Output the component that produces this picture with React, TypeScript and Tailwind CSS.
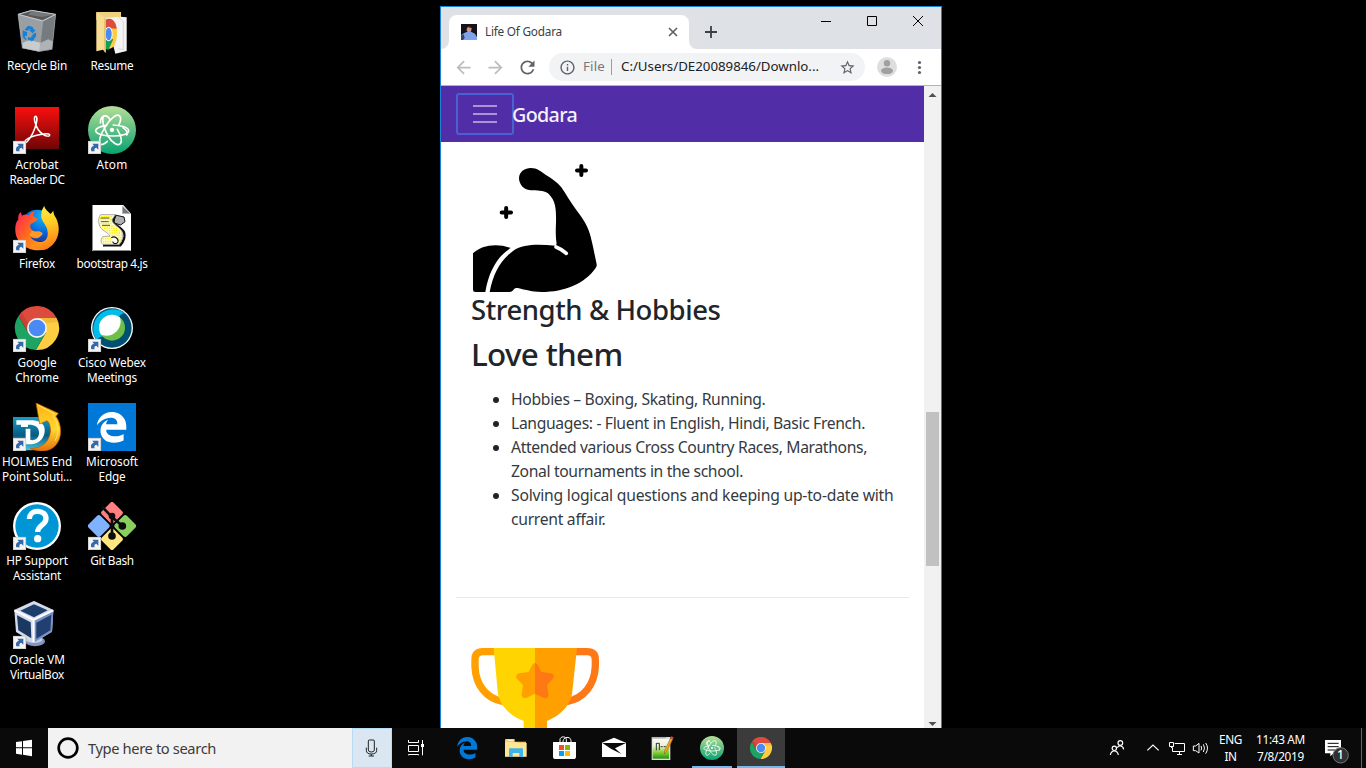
import { useLayoutEffect, useRef } from "react";
import type { ReactNode } from "react";
import { MdArrowBack, MdArrowForward, MdRefresh, MdInfoOutline, MdStarBorder } from "react-icons/md";

/** Single line of text whose tracking is adjusted so that it fills a given width. */
function Fit({ w, children, className = "" }: { w: number; children: string; className?: string }) {
  const ref = useRef<HTMLSpanElement>(null);
  useLayoutEffect(() => {
    const el = ref.current;
    if (!el) return;
    el.style.letterSpacing = "0px";
    const natural = el.getBoundingClientRect().width;
    el.style.letterSpacing = `${(w - natural) / children.length}px`;
  }, [w, children]);
  return (
    <span ref={ref} className={`inline-block whitespace-pre ${className}`}>
      {children}
    </span>
  );
}

const EDGE =
  "M25.7 228.2l.4-.7c0 .2 0 .5-.1.7h-.3zm460.6 15.5c0-44-7.8-84.5-28.8-122.4C416.5 47.8 343.9 8 258.9 8 119 7.7 40.6 113.2 26 227.5c42.4-61.3 117.1-121.4 220.4-125 0 0 109.7 0 99.4 105H170c6.4-37.4 18.6-59 34.3-78.9-75.1 34.9-121.9 96.1-120.8 188.4.8 71.5 50.1 144.8 120.8 172 83.4 31.8 192.8 7.2 240.1-21.3V363.3c-80.9 56.5-270.9 60.9-272.3-67.6h314.2v-52z";

function ChromeArt() {
  return (
    <>
      <path d="M55.6 363A66 66 0 0 1 169.8 369H111L85 414Z" fill="#dc4b3e" />
      <path d="M169.8 369A66 66 0 0 1 107.5 465L137 414L111 369Z" fill="#ffcd41" />
      <path d="M107.5 465A66 66 0 0 1 55.6 363L85 414H137Z" fill="#1da462" />
      <path d="M111 369H169.8L174 381L137 385Z" fill="#e0a52c" opacity=".45" />
      <path d="M55.6 363L85 414L92 395L66 355Z" fill="#a83228" opacity=".35" />
      <circle cx="111" cy="399" r="30" fill="#f4f4f4" />
      <circle cx="111" cy="399" r="25" fill="#4a8af4" />
    </>
  );
}

function AtomArt() {
  return (
    <>
      <defs>
        <linearGradient id="atomGreen" x1="0" y1="0" x2="0" y2="1">
          <stop offset="0" stopColor="#b5df97" />
          <stop offset=".5" stopColor="#5fbf84" />
          <stop offset="1" stopColor="#06a471" />
        </linearGradient>
      </defs>
      <circle cx="336" cy="390" r="72" fill="url(#atomGreen)" />
      <g fill="none" stroke="#fff" strokeWidth="5" strokeLinecap="round">
        <path d="M320 376C301 379 287 385 287 392C287 401 310 408 340 408C368 408 386 401 386 392C386 383 365 377 340 375" />
        <path d="M322 424C312 434 303 436 300 430C295 420 304 400 316 380C331 356 349 341 358 347C364 352 362 364 356 376" />
        <path d="M330 358C322 347 314 344 310 350C305 361 312 387 324 408C337 430 354 438 361 431C367 423 362 405 352 388" />
        <path d="M301 369C301 353 309 345 320 348" />
        <path d="M369 383C379 390 386 399 380 405" />
      </g>
      <circle cx="336" cy="390" r="6.500" fill="#fff" />
    </>
  );
}

const icons: Record<string, ReactNode> = {
  recycle: (
    <g transform="translate(-39 -21)">
      <path d="M54 43L95 30L167 43L156 149L117 155L67 145Z" fill="#8d9297" />
      <path d="M54 43L128 64L117 155L67 145Z" fill="#9a9fa3" />
      <path d="M128 64L167 43L156 149L117 155Z" fill="#767b80" />
      <path d="M59 43L95 33L161 44L127 60Z" fill="#55585b" />
      <path d="M95 33L161 44L127 51L85 44Z" fill="#74787b" />
      <path d="M67 129L88 121L122 128L119 154L69 144Z" fill="#c9cccd" />
      <path d="M122 128L145 118L158 124L155 147L118 154Z" fill="#afb3b5" />
      <path d="M54 43L95 31L167 43L128 63Z" fill="none" stroke="#c7cacb" strokeWidth="3" />
      <path d="M54 43L67 145M167 43L156 149M128 64L118 154" stroke="#b4b8ba" strokeWidth="1.500" />
      <g fill="#1580d5">
        <path d="M78 84L85 77L97 80L102 89L107 90L98 100L87 91L92 90L88 87L83 93L74 89Z" />
        <path d="M68 91L82 97L80 110L76 106L74 112L80 116L77 121L68 111Z" />
        <path d="M84 111L92 113V122L84 120ZM94 107L104 117L94 125L94 121L88 119L94 111ZM100 101L109 98L107 112L101 116L96 107Z" />
      </g>
    </g>
  ),
  resume: (
    <g transform="translate(-264 -21)">
      <path d="M289 36H363V60H289Z" fill="#eed27c" />
      <path d="M318 53L362 50L380 52V153L346 161Z" fill="#f3f3f3" />
      <path d="M357 51L370 66V149L355 146" fill="none" stroke="#c9c9c9" strokeWidth="2" />
      <path d="M316 59C340 48 352 74 351 102C350 137 335 153 318 144Z" fill="#ffcd41" />
      <path d="M317 59C336 50 348 66 350 86L317 84Z" fill="#dc4b3e" />
      <path d="M316 112L340 118L325 150L316 146Z" fill="#159f55" />
      <ellipse cx="326" cy="102" rx="12" ry="22" fill="#f5f5f5" />
      <ellipse cx="326" cy="102" rx="9" ry="19" fill="#4a8af4" />
      <path d="M289 37L317 55V159L309 149L289 154Z" fill="#f8dc91" />
      <path d="M312 55L317 58V158L312 152Z" fill="#e5c46d" />
    </g>
  ),
  acrobat: (
    <g transform="translate(-39 -318)">
      <defs>
        <linearGradient id="acroRed" x1="0" y1="0" x2="0" y2="1">
          <stop offset="0" stopColor="#fa0f0f" />
          <stop offset="1" stopColor="#6f0505" />
        </linearGradient>
      </defs>
      <path d="M45 321H177V447H45Z" fill="url(#acroRed)" />
      <path
        d="M75 424C78 416 91 411 104 407C121 402 146 399 149 404C150 410 139 410 129 403C115 394 107 376 104 363C102 353 104 348 108 349C113 352 110 370 104 386C96 408 83 426 77 428C73 429 73 427 75 424Z"
        fill="none"
        stroke="#fff"
        strokeWidth="4.500"
      />
    </g>
  ),
  atom: (
    <g transform="translate(-264 -318)">
      <AtomArt />
    </g>
  ),
  firefox: (
    <g transform="translate(-39 -30)">
      <defs>
        <linearGradient id="fxFire" x1="0" y1="0" x2="1" y2=".6">
          <stop offset="0" stopColor="#ff1c62" />
          <stop offset=".45" stopColor="#ff6a1c" />
          <stop offset="1" stopColor="#ffb51f" />
        </linearGradient>
        <linearGradient id="fxFlame" x1=".2" y1="0" x2=".4" y2="1">
          <stop offset="0" stopColor="#fff44c" />
          <stop offset=".5" stopColor="#ffc822" />
          <stop offset="1" stopColor="#ff7d18" />
        </linearGradient>
        <radialGradient id="fxBlue" cx=".65" cy=".2" r=".9">
          <stop offset="0" stopColor="#11b5f5" />
          <stop offset=".6" stopColor="#0a63d8" />
          <stop offset="1" stopColor="#202a8e" />
        </radialGradient>
      </defs>
      <path d="M76 60C90 42 118 40 140 50L158 80L140 140H90L70 100Z" fill="url(#fxBlue)" />
      <path
        d="M62 51L66 62C73 58 81 58 86 61C92 52 100 49 104 50C98 59 97 64 112 71C110 81 98 82 92 87C90 92 89 98 96 105C106 116 119 103 128 116C119 132 102 134 90 124C104 148 142 148 154 113L172 90C178 115 168 148 139 162C96 177 48 149 46 108C45 88 50 78 55 74C54 63 56 56 62 51Z"
        fill="url(#fxFire)"
      />
      <path
        d="M133 32C132 41 147 51 152 57L160 47C161 57 163 61 168 69C186 105 173 145 142 161C119 171 99 160 91 148C119 155 146 138 143 112C142 88 121 79 124 59C124 46 129 38 133 32Z"
        fill="url(#fxFlame)"
      />
      <path d="M96 106C106 115 119 103 128 116C119 130 100 132 88 120Z" fill="#ff9a26" />
    </g>
  ),
  script: (
    <g transform="translate(-264 -30)">
      <path d="M276 30H370L393 57V168H276Z" fill="#fff" />
      <path d="M277.500 30V166.500H392" fill="none" stroke="#888" strokeWidth="3" />
      <path d="M366 32V57H392L389 51L369 32Z" fill="#c8c8c8" />
      <path d="M368 35L389 55H368Z" fill="#787878" />
      <path d="M345 60L372 66L375 80L362 90L342 84Z" fill="#b0b0b0" stroke="#111" strokeWidth="3" />
      <path d="M346 62L338 78C340 90 366 98 372 112C377 126 370 140 360 152" fill="none" stroke="#111" strokeWidth="7" />
      <path d="M302 59H346L336 74C336 88 360 96 366 110C372 124 366 138 356 148H308C300 142 302 126 312 124H330C326 112 302 106 298 90C294 76 296 66 302 59Z" fill="#fffdc4" stroke="#999" strokeWidth="2.500" />
      <g stroke="#ffee00" strokeWidth="4" strokeDasharray="4 3">
        <path d="M304 65H338M300 72H334M301 79H334M302 86H337M306 93H342M312 100H352M320 107H360M328 114H364M334 121H366M340 128H367M344 135H364M308 131H332M308 140H334" />
      </g>
      <path d="M302 69H328M303 80H326M306 91H330" stroke="#333" strokeWidth="2.500" />
      <path d="M334 128C344 122 356 130 354 140C352 148 340 148 338 140" fill="#fff" stroke="#111" strokeWidth="3.500" />
      <path d="M309 152H362" stroke="#111" strokeWidth="5" />
    </g>
  ),
  chrome: (
    <g transform="translate(-39 -327)">
      <ChromeArt />
    </g>
  ),
  webex: (
    <g transform="translate(-264 -327)">
      <defs>
        <clipPath id="webexInner">
          <circle cx="336" cy="398" r="39" />
        </clipPath>
      </defs>
      <circle cx="336" cy="399" r="63" fill="#fff" />
      <circle cx="336" cy="399" r="59" fill="#005073" />
      <path d="M290 435A59 59 0 0 1 376 356C366 353 359 359 357 367L312 424C304 424 296 427 290 435Z" fill="#00bceb" />
      <circle cx="336" cy="398" r="39" fill="#6ebe4a" />
      <circle cx="319" cy="379" r="43" fill="#fff" clipPath="url(#webexInner)" />
    </g>
  ),
  holmes: (
    <g transform="translate(-39 -39)">
      <defs>
        <linearGradient id="holBlue" x1="0" y1="0" x2="0" y2="1">
          <stop offset="0" stopColor="#159ec7" />
          <stop offset=".55" stopColor="#075a82" />
          <stop offset="1" stopColor="#45c9df" />
        </linearGradient>
        <linearGradient id="holGold" x1="0" y1="0" x2="0" y2="1">
          <stop offset="0" stopColor="#ffb315" />
          <stop offset=".55" stopColor="#ffd62e" />
          <stop offset="1" stopColor="#e6710c" />
        </linearGradient>
      </defs>
      <path d="M39 81H139L151 100L148 172L96 181H39Z" fill="url(#holBlue)" />
      <path d="M49 91H99C126 93 136 107 134 125C132 147 114 162 93 163H77V116H91V150C109 153 118 141 117 126C116 110 104 104 88 104H84V111H63V104H49Z" fill="#fff" />
      <path d="M108 39L175 70L168 79C193 115 184 169 143 181C126 186 100 182 91 175C127 176 149 153 151 125C152 107 147 95 141 92L119 102Z" fill="url(#holGold)" stroke="#ba5a09" strokeWidth="2" />
      <path d="M112 44L164 72L157 77C174 93 180 128 165 152" fill="none" stroke="#ffe669" strokeWidth="3" />
    </g>
  ),
  edge: (
    <g transform="translate(-264 -39)">
      <path d="M264 39H408V183H264Z" fill="#0078d7" />
      <g transform="translate(285.500 64.500) scale(.192 .186)">
        <path d={EDGE} fill="#fff" />
      </g>
    </g>
  ),
  hp: (
    <g transform="translate(-39 -336)">
      <circle cx="111" cy="408" r="72" fill="#fff" />
      <circle cx="111" cy="408" r="65" fill="#0096d6" />
      <path d="M88 387C88 374 97 364 112 364C128 364 138 373 138 386C138 405 113 405 113 426" fill="none" stroke="#fff" strokeWidth="16" />
      <circle cx="113" cy="446" r="11" fill="#fff" />
    </g>
  ),
  git: (
    <g transform="translate(-264 -336)">
      <g transform="rotate(45 336 408)">
        <rect x="283" y="355" width="50" height="50" rx="7" fill="#ff8080" />
        <rect x="339" y="355" width="50" height="50" rx="7" fill="#8ad05e" />
        <rect x="283" y="411" width="50" height="50" rx="7" fill="#80b3ff" />
        <rect x="339" y="411" width="50" height="50" rx="7" fill="#ffe680" />
      </g>
      <path d="M306 350L336 381V438M336 381L367 408" fill="none" stroke="#0d0d0d" strokeWidth="8" />
      <g fill="#0d0d0d">
        <circle cx="336" cy="378" r="10" />
        <circle cx="336" cy="438" r="11.500" />
        <circle cx="367" cy="408" r="11.500" />
      </g>
    </g>
  ),
  vbox: (
    <g transform="translate(-39 -33)">
      <ellipse cx="105" cy="154" rx="30" ry="15" fill="#8495bd" />
      <ellipse cx="102" cy="149" rx="25" ry="10" fill="#c6cee2" />
      <path d="M102 34L160 61L156 125L101 158L48 126L43 61Z" fill="#d3dbec" />
      <path d="M101 91L160 61L156 125L101 158Z" fill="#7891c7" />
      <path d="M61 62L102 43L143 61L102 82Z" fill="#1d3d6b" />
      <path d="M51 76L92 97L94 145L55 121Z" fill="#1b3861" />
      <path d="M109 98L154 74L151 121L109 146Z" fill="#213f70" />
      <path d="M43 61L101 90L160 61M101 90V157" fill="none" stroke="#fff" strokeWidth="6" />
      <path d="M43 61L102 34L160 61" fill="none" stroke="#edf1fa" strokeWidth="2" />
    </g>
  ),
};

type Item = { icon: string; link?: boolean; lines: [string, number][] };

const left: Item[] = [
  { icon: "recycle", lines: [["Recycle Bin", 60]] },
  { icon: "acrobat", link: true, lines: [["Acrobat", 43], ["Reader DC", 55]] },
  { icon: "firefox", link: true, lines: [["Firefox", 36]] },
  { icon: "chrome", link: true, lines: [["Google", 39], ["Chrome", 43.5]] },
  { icon: "holmes", link: true, lines: [["HOLMES End", 70], ["Point Soluti...", 70]] },
  { icon: "hp", link: true, lines: [["HP Support", 61.5], ["Assistant", 48]] },
  { icon: "vbox", link: true, lines: [["Oracle VM", 55.5], ["VirtualBox", 54]] },
];

const right: Item[] = [
  { icon: "resume", lines: [["Resume", 43]] },
  { icon: "atom", link: true, lines: [["Atom", 31]] },
  { icon: "script", lines: [["bootstrap 4.js", 71]] },
  { icon: "webex", link: true, lines: [["Cisco Webex", 68], ["Meetings", 50]] },
  { icon: "edge", link: true, lines: [["Microsoft", 52], ["Edge", 27]] },
  { icon: "git", link: true, lines: [["Git Bash", 43.5]] },
];

function DesktopIcon({ item }: { item: Item }) {
  return (
    <div className="flex h-[99px] w-[74px] flex-col items-center pt-[7px]">
      <svg className="h-12 w-12 shrink-0" viewBox="0 0 144 144">
        {icons[item.icon]}
        {item.link && (
          <g transform="translate(0 105)">
            <path d="M0 0H39V39H0Z" fill="#f4f4f4" />
            <path d="M1 1H38V38H1Z" fill="none" stroke="#b9b9b9" strokeWidth="2" />
            <path d="M10 31C7 21 11 16 18 14L13 8H31V26L25 20C19 22 18 25 20 31Z" fill="#3568a6" />
          </g>
        )}
      </svg>
      <div className="mt-[3px] flex w-full flex-col items-center text-[11.8px] leading-[15px] text-white">
        {item.lines.map(([t, w]) => (
          <Fit key={t} w={w}>
            {t}
          </Fit>
        ))}
      </div>
    </div>
  );
}

function TabStrip() {
  return (
    <div className="flex h-[42px] w-full bg-[#dee1e6] text-[#3c4043]">
      <svg className="mt-[34px] h-2 w-2" viewBox="0 0 8 8">
        <path d="M8 0V8H0A8 8 0 0 0 8 0Z" fill="#fff" />
      </svg>
      <div className="mt-2 flex h-[34px] w-60 items-center rounded-t-lg bg-white pl-3">
        <svg className="h-4 w-4" viewBox="0 0 48 48">
          <path d="M0 0H48V48H0Z" fill="#17121a" />
          <path d="M17 12Q25 2 32 12L30 23L21 25L17 20Z" fill="#c99887" />
          <path d="M14 13Q24 -1 35 13L31 12L20 9L17 16Z" fill="#241817" />
          <path d="M0 34Q12 23 22 23H30L42 29L48 40V48H5L4 38Z" fill="#7ea3ea" />
          <path d="M0 35L8 31L11 41L6 48H0Z" fill="#34456f" />
        </svg>
        <span className="ml-2 text-[11.8px]">
          <Fit w={77}>Life Of Godara</Fit>
        </span>
        <svg className="mr-[11px] ml-auto h-[10px] w-[10px]" viewBox="0 0 10 10">
          <path d="M1 1L9 9M9 1L1 9" stroke="#5f6368" strokeWidth="1.700" />
        </svg>
      </div>
      <svg className="mt-[34px] h-2 w-2" viewBox="0 0 8 8">
        <path d="M0 0V8H8A8 8 0 0 1 0 0Z" fill="#fff" />
      </svg>
      <svg className="mt-[19px] ml-2 h-3 w-3" viewBox="0 0 12 12">
        <path d="M6 0V12M0 6H12" stroke="#3c4043" strokeWidth="1.800" />
      </svg>
      <svg className="ml-auto h-7 w-[138px]" viewBox="0 0 138 28" fill="none" stroke="#000">
        <path d="M18 14.500H28" />
        <path d="M64.500 9.500H73.500V18.500H64.500Z" />
        <path d="M110 9L120 19M120 9L110 19" />
      </svg>
    </div>
  );
}

function Toolbar() {
  return (
    <div className="flex h-[37px] w-full items-center border-b border-[#b6b4b6] bg-white pl-[6px] text-[#5f6368]">
      <div className="flex w-8 justify-center text-[#bbbdc0]">
        <MdArrowBack size={21} />
      </div>
      <div className="flex w-8 justify-center text-[#bbbdc0]">
        <MdArrowForward size={21} />
      </div>
      <div className="flex w-8 justify-center">
        <MdRefresh size={21} />
      </div>
      <div className="ml-[6px] flex h-7 w-[316px] items-center rounded-full bg-[#f1f3f4] pr-[9px] pl-[10px] text-[13.300px]">
        <MdInfoOutline size={17} />
        <span className="ml-[7px] w-[22px] text-[#75797d]">
          <Fit w={22}>File</Fit>
        </span>
        <span className="ml-[6px] h-4 w-px bg-[#9a9da1]" />
        <span className="ml-[9px] text-[#202124]">
          <Fit w={198}>C:/Users/DE20089846/Downlo...</Fit>
        </span>
        <MdStarBorder size={17} className="ml-auto" />
      </div>
      <div className="ml-[6px] flex w-8 justify-center">
        <svg className="h-5 w-5" viewBox="0 0 20 20">
          <circle cx="10" cy="10" r="10" fill="#dedede" />
          <circle cx="10" cy="6.200" r="3.200" fill="#a0a0a0" />
          <ellipse cx="10" cy="13.800" rx="6" ry="3.300" fill="#a0a0a0" />
        </svg>
      </div>
      <div className="flex w-8 justify-center">
        <svg className="h-4 w-4" viewBox="0 0 16 16" fill="#5f6368">
          <circle cx="8.500" cy="3.500" r="1.600" />
          <circle cx="8.500" cy="8.500" r="1.600" />
          <circle cx="8.500" cy="13.500" r="1.600" />
        </svg>
      </div>
    </div>
  );
}

function Arm() {
  return (
    <svg className="h-32 w-32" viewBox="63 57 384 384">
      <path d="M69 325C94 301 139 293 182 309C145 332 117 375 106 441H76Q69 441 69 434Z" />
      <path d="M119 441C130 386 149 348 190 317C222 295 270 298 316 302C322 299 319 293 318 280C316 252 319 237 318 213C318 181 312 162 294 145C280 135 260 137 242 136C220 134 207 117 207 99C208 80 225 69 242 69C262 69 273 80 288 90C306 101 322 112 334 127C350 151 362 172 379 195C401 223 414 245 422 275C430 306 434 330 440 358Q441 364 437 369C405 416 344 441 275 441C242 440 221 433 203 429C194 427 191 434 187 438Q184 441 177 441Z" />
      <path d="M318 306Q334 312 349 325" fill="none" stroke="#fff" strokeWidth="11" strokeLinecap="round" />
      <path d="M394 63V90M381 76.500H408M168.500 189V216M155 202.500H183" stroke="#000" strokeWidth="12" strokeLinecap="round" />
    </svg>
  );
}

function Trophy() {
  return (
    <svg className="h-20 w-32" viewBox="63 174 384 240">
      <path d="M134 185H99Q75 185 75 209V230C77 284 108 326 160 335" fill="none" stroke="#ff9f00" strokeWidth="22" />
      <path d="M376 185H411Q436 185 436 209V230C433 284 402 326 350 335" fill="none" stroke="#ff7816" strokeWidth="22" />
      <path d="M131 174H256V414H221V393C182 379 146 345 143 304Z" fill="#ffd400" />
      <path d="M255 174H381L367 304C364 345 329 379 291 393V414H255Z" fill="#ff9f00" />
      <path d="M255 219Q249 219 245 228L236 246L208 250Q194 254 200 265L219 285L215 314Q216 326 228 324L255 311Z" fill="#ff9f00" />
      <path d="M255 219Q261 219 265 228L274 246L302 250Q316 254 310 265L291 285L295 314Q294 326 282 324L255 311Z" fill="#ff7816" />
    </svg>
  );
}

function Browser() {
  return (
    <div className="absolute top-[6px] left-[440px] flex h-[722px] w-[502px] flex-col border border-b-0 border-[#1883d7] bg-white">
      <TabStrip />
      <Toolbar />
      <div className="flex min-h-0 flex-1">
        <div className="flex w-[483px] flex-col overflow-hidden bg-white">
          <nav className="flex h-14 shrink-0 items-center bg-[#512da8] pl-[15px]">
            <div className="flex h-[42px] w-[58px] items-center justify-center rounded-[3px] border-2 border-[#4961d1]">
              <svg className="h-[30px] w-[30px]" viewBox="0 0 30 30">
                <path d="M3 7H27M3 15H27M3 23H27" stroke="#a896d4" strokeWidth="2" />
              </svg>
            </div>
            <span className="-ml-[2px] pt-[2px] text-[19.700px] font-medium leading-[30px] text-[#f4f1fa]">
              <Fit w={65}>Godara</Fit>
            </span>
          </nav>
          <main className="flex shrink-0 flex-col pt-[22px] text-[#212529]">
            <div className="pl-[30px]">
              <Arm />
            </div>
            <h3 className="mt-px pl-[30px] text-[27.500px] font-medium leading-[34px]">
              <Fit w={249.5}>Strength &amp; Hobbies</Fit>
            </h3>
            <h2 className="mt-2 pl-[30px] text-[31.400px] font-medium leading-[38px]">
              <Fit w={151.5}>Love them</Fit>
            </h2>
            <ul className="mt-[14px] flex flex-col pl-[52px] text-[15.700px] leading-6">
              {(
                [
                  [["Hobbies – Boxing, Skating, Running.", 254.5]],
                  [["Languages: - Fluent in English, Hindi, Basic French.", 354]],
                  [["Attended various Cross Country Races, Marathons,", 356], ["Zonal tournaments in the school.", 232]],
                  [["Solving logical questions and keeping up-to-date with", 382.5], ["current affair.", 94.5]],
                ] as [string, number][][]
              ).map((lines) => (
                <li key={lines[0][0]} className="flex">
                  <span className="mt-[10px] mr-[12px] h-[6px] w-[6px] shrink-0 rounded-full bg-[#212529]" />
                  <div className="flex flex-col items-start text-[#343a3f]">
                    {lines.map(([t, w]) => (
                      <Fit key={t} w={w}>
                        {t}
                      </Fit>
                    ))}
                  </div>
                </li>
              ))}
            </ul>
            <hr className="mt-[66px] ml-[15px] w-[453px] border-[#e9e9e9]" />
            <div className="mt-[50px] pl-[30px]">
              <Trophy />
            </div>
          </main>
        </div>
        <div className="flex w-[17px] flex-col items-center bg-[#f1f1f1]">
          <svg className="h-[17px] w-[17px]" viewBox="0 0 17 17">
            <path d="M4.500 11L8.500 7L12.500 11Z" fill="#505050" />
          </svg>
          <div className="mt-[309px] h-[154px] w-[13px] bg-[#c1c1c1]" />
          <svg className="mt-auto h-[17px] w-[17px]" viewBox="0 0 17 17">
            <path d="M4.500 11L8.500 15L12.500 11Z" fill="#505050" />
          </svg>
        </div>
      </div>
    </div>
  );
}

function TaskButton({ children, className = "" }: { children: ReactNode; className?: string }) {
  return <div className={`mr-px flex h-10 w-12 shrink-0 ${className}`}>{children}</div>;
}

function Taskbar() {
  return (
    <div className="flex h-10 w-full bg-[#0a0a0a] text-white">
      <svg className="h-10 w-12" viewBox="0 9 144 120" fill="#fff">
        <path d="M48 51L66 48.500V67H48ZM69 48L96 44.500V67H69ZM48 70H66V89L48 86.500ZM69 70H96V93.500L69 89.500Z" />
      </svg>
      <div className="flex h-10 w-[344px] items-center bg-[#f2f2f2]">
        <svg className="h-10 w-10" viewBox="144 9 120 120">
          <circle cx="204" cy="69" r="28" fill="none" stroke="#000" strokeWidth="8" />
        </svg>
        <span className="text-[14.700px] text-[#3b3b3b]">
          <Fit w={128}>Type here to search</Fit>
        </span>
        <div className="ml-auto h-10 w-10 border border-[#b8daf2] bg-[#dae6f1]">
          <svg className="-mt-px -ml-px h-10 w-10" viewBox="1056 9 120 120" fill="none" stroke="#222" strokeWidth="3">
            <path d="M1105 48Q1105 45 1108 45H1120Q1123 45 1123 48V75Q1123 81 1114 81Q1105 81 1105 75ZM1099 68V76Q1099 87 1114 87Q1130 87 1130 76V68M1114 87V93M1106 93H1122" />
          </svg>
        </div>
      </div>
      <svg className="mr-[3px] h-10 w-12" viewBox="1176 9 144 120" fill="none" stroke="#fff" strokeWidth="3">
        <path d="M1225.500 45V52.500H1255.500V45M1225.500 61.500H1255.500V79.500H1225.500ZM1225.500 91V88.500H1255.500V91M1267.500 45V91" />
        <path d="M1263 57H1272V66H1263Z" fill="#fff" stroke="none" />
      </svg>
      <TaskButton>
        <svg className="h-10 w-12" viewBox="9 9 144 120">
          <g transform="translate(48 35) scale(.131 .134)">
            <path d={EDGE} fill="#0078d7" />
          </g>
        </svg>
      </TaskButton>
      <TaskButton>
        <svg className="h-10 w-12" viewBox="156 9 144 120">
          <path d="M195 44Q195 42 198 42H224V50H258V94H195Z" fill="#f3cc63" />
          <path d="M195 51H230L234 54H260V95H195Z" fill="#ffe694" />
          <path d="M202 44H220V48H202Z" fill="#fff3c2" />
          <path d="M207 73Q207 70 210 70H246Q249 70 249 73V96H238V84H218V96H207Z" fill="#3eb4e8" />
        </svg>
      </TaskButton>
      <TaskButton>
        <svg className="h-10 w-12" viewBox="303 9 144 120">
          <path d="M360 53V43C362 33 377 33 379 43V53M369 51C368 36 391 31 393 47V52" fill="none" stroke="#fff" strokeWidth="3" />
          <path d="M339 51H408V95Q408 102 400 102H347Q339 102 339 95Z" fill="#fff" />
          <path d="M357 60H372V75H357Z" fill="#f25022" />
          <path d="M375 60H390V75H375Z" fill="#7fba00" />
          <path d="M357 78H372V93H357Z" fill="#00a4ef" />
          <path d="M375 78H390V93H375Z" fill="#ffb900" />
        </svg>
      </TaskButton>
      <TaskButton>
        <svg className="h-10 w-12" viewBox="450 9 144 120">
          <path d="M486 53L522 38L558 53V96H486Z" fill="#fff" />
          <path d="M487 54H558L525 70L544 87L514 72Z" fill="#0a0a0a" />
        </svg>
      </TaskButton>
      <TaskButton>
        <svg className="h-10 w-12" viewBox="597 9 144 120">
          <defs>
            <linearGradient id="npp" x1="0" y1="0" x2="0" y2="1">
              <stop offset="0" stopColor="#f8faf4" />
              <stop offset=".35" stopColor="#e9f3d4" />
              <stop offset=".7" stopColor="#82cd34" />
              <stop offset="1" stopColor="#25910c" />
            </linearGradient>
          </defs>
          <path d="M635 36H691V105H635Z" fill="#dcdcd8" />
          <path d="M638 42H687V101H638Z" fill="url(#npp)" />
          <path d="M639 35V40M645 35V40M651 35V40M657 35V40M663 35V40M669 35V40M675 35V40" stroke="#555" strokeWidth="2" />
          <path d="M649 54V76M650 55H658V75M662 65H668M671 65H677" fill="none" stroke="#303030" strokeWidth="3" />
          <path d="M693 37L699 41L680 80L673 87L674 76Z" fill="#f3a51c" stroke="#8b571e" strokeWidth="1.500" />
          <path d="M693 34L701 37L698 44L690 40Z" fill="#d0444d" />
        </svg>
      </TaskButton>
      <TaskButton className="flex-col items-center">
        <svg className="mt-2 h-6 w-6" viewBox="264 318 144 144">
          <AtomArt />
        </svg>
        <span className="mt-auto h-[2px] w-10 bg-[#76b9ed]" />
      </TaskButton>
      <TaskButton className="flex-col items-center bg-[#3b3b3b]">
        <svg className="mt-2 h-6 w-6" viewBox="39 327 144 144">
          <ChromeArt />
        </svg>
        <span className="mt-auto h-[2px] w-12 bg-[#76b9ed]" />
      </TaskButton>
      <div className="ml-auto flex h-10">
        <svg className="h-10 w-[114px]" viewBox="0 9 342 120" fill="none" stroke="#fff" strokeWidth="3.600">
          <circle cx="61" cy="54" r="7" />
          <circle cx="43" cy="70" r="6.500" />
          <path d="M52 68C56 60 69 61 71 73M31 90C34 74 52 74 55 90" />
          <path d="M142 76L159 60L176 76" />
          <path d="M224 55.500H253.500V79.500H217.500V67M231 88.500H246M238.500 80V89" strokeWidth="3" />
          <path d="M208.500 52.500H220.500V64.500H208.500ZM214.500 64V69" strokeWidth="3" />
          <path d="M280 63H287L297 55V84L287 77H280ZM303 63Q307 69 303 76M310 58Q317 69 310 81M317 54Q328 69 317 86" strokeWidth="3" />
        </svg>
        <div className="flex w-[33px] flex-col items-center pt-[3px] text-[11.800px] leading-[17px]">
          <Fit w={23}>ENG</Fit>
          <Fit w={12}>IN</Fit>
        </div>
        <div className="flex w-[67px] flex-col items-center pt-[3px] text-[11.800px] leading-[17px]">
          <Fit w={49}>11:43 AM</Fit>
          <Fit w={47}>7/8/2019</Fit>
        </div>
        <div className="relative h-10 w-[52px]">
          <svg className="h-10 w-[52px]" viewBox="642 9 156 120">
            <path d="M675 45H723V85H701L691 94V85H675Z" fill="#fff" />
            <path d="M683 55H716M683 65H716M683 75H706" stroke="#0a0a0a" strokeWidth="3" />
            <circle cx="722" cy="91" r="23" fill="#303030" stroke="#777" strokeWidth="3" />
            <path d="M784.500 9V129" stroke="#666" strokeWidth="3" />
          </svg>
          <span className="absolute top-[19px] left-[23px] text-[12px] leading-4 font-medium">1</span>
        </div>
      </div>
    </div>
  );
}

export default function App() {
  return (
    <div className="relative flex h-[768px] w-[1366px] flex-col overflow-hidden bg-black font-['Noto_Sans','Open_Sans',sans-serif]">
      <div className="flex h-[728px] gap-px">
        <div className="flex flex-col">
          {left.map((item) => (
            <DesktopIcon key={item.icon} item={item} />
          ))}
        </div>
        <div className="flex flex-col">
          {right.map((item) => (
            <DesktopIcon key={item.icon} item={item} />
          ))}
        </div>
      </div>
      <Browser />
      <Taskbar />
    </div>
  );
}
